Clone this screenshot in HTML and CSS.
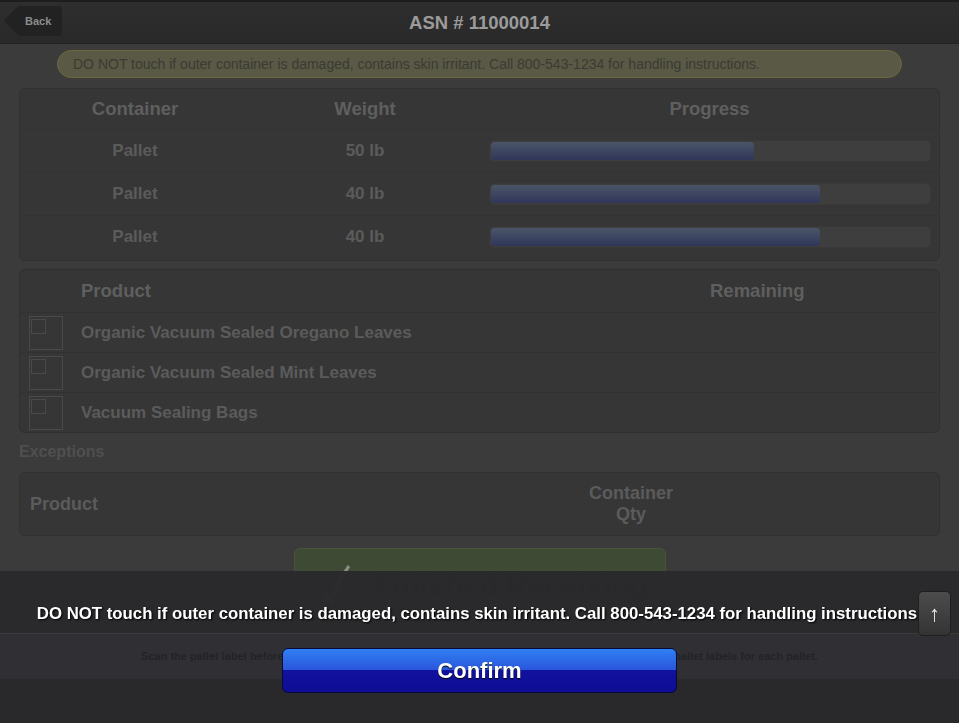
FILE: index.html
```html
<!DOCTYPE html>
<html>
<head>
    <title>ASN # 11000014 - Receiving</title>
    <link rel="stylesheet" href="styles.css">
</head>
<body>
    <div class="page">
        <header class="bar">
            <a class="back" href="#">Back</a>
            <h1>ASN # 11000014</h1>
        </header>

        <main class="content">
            <p class="notice">DO NOT touch if outer container is damaged, contains skin irritant. Call 800-543-1234 for handling instructions.</p>

            <!-- containers on this ASN -->
            <section class="box containers">
                <div class="crow head">
                    <span>Container</span>
                    <span>Weight</span>
                    <span>Progress</span>
                </div>
                <div class="crow">
                    <span>Pallet</span>
                    <span>50 lb</span>
                    <div class="track"><div class="fill" style="width: 60%"></div></div>
                </div>
                <div class="crow">
                    <span>Pallet</span>
                    <span>40 lb</span>
                    <div class="track"><div class="fill" style="width: 75%"></div></div>
                </div>
                <div class="crow">
                    <span>Pallet</span>
                    <span>40 lb</span>
                    <div class="track"><div class="fill" style="width: 75%"></div></div>
                </div>
            </section>

            <!-- products -->
            <section class="box products">
                <div class="prow head">
                    <span></span>
                    <span>Product</span>
                    <span>Remaining</span>
                </div>
                <div class="prow">
                    <span class="check"><span></span></span>
                    <span>Organic Vacuum Sealed Oregano Leaves</span>
                    <span></span>
                </div>
                <div class="prow">
                    <span class="check"><span></span></span>
                    <span>Organic Vacuum Sealed Mint Leaves</span>
                    <span></span>
                </div>
                <div class="prow">
                    <span class="check"><span></span></span>
                    <span>Vacuum Sealing Bags</span>
                    <span></span>
                </div>
            </section>

            <h3 class="label">Exceptions</h3>
            <section class="box exceptions">
                <div class="erow">
                    <span>Product</span>
                    <span class="qty">Container Qty</span>
                </div>
            </section>

            <button class="finish">
                <svg width="30" height="42" viewBox="0 0 30 42"><path d="M2 26 L11 38 Q16 18 28 2" fill="none" stroke="#8c8c8c" stroke-width="3"/></svg>
                Finished Receiving
            </button>
        </main>

        <footer class="foot">Scan the pallet label before receiving any product on this ASN. Be sure to print and attach the correct pallet labels for each pallet.</footer>
    </div>

    <!-- warning popup -->
    <div class="dialog">
        <p class="dialog-msg">DO NOT touch if outer container is damaged, contains skin irritant. Call 800-543-1234 for handling instructions</p>
        <button class="confirm">Confirm</button>
        <button class="to-top">&uarr;</button>
    </div>
</body>
</html>
```

FILE: styles.css
```css
* {
    box-sizing: border-box;
}
html, body {
    margin: 0;
    height: 100%;
}
body {
    background-color: #29292c;
    font-family: "Liberation Sans", Arial, sans-serif;
    overflow: hidden;
}
.page {
    background-color: #3b3b3b;
}
.bar {
    position: relative;
    height: 44px;
    display: flex;
    align-items: center;
    justify-content: center;
    background: linear-gradient(#2e2e2e, #292929);
    border-top: 2px solid #1d1d1d;
    border-bottom: 1px solid #242424;
}
.bar h1 {
    margin: 0;
    font-size: 18.5px;
    color: #9b9b9b;
}
.back {
    position: absolute;
    z-index: 1;
    left: 18px;
    top: 4px;
    width: 44px;
    height: 30px;
    line-height: 30px;
    padding-left: 7px;
    background-color: #222;
    border-radius: 0 4px 4px 0;
    color: #8c8c8c;
    font-size: 11px;
    font-weight: bold;
    text-decoration: none;
}
.back::before {
    content: "";
    position: absolute;
    left: -10px;
    top: 4px;
    width: 21px;
    height: 21px;
    background-color: #222;
    transform: rotate(45deg);
    border-radius: 2px;
    z-index: -1;
}
.content {
    padding: 6px 19px 0;
}
.notice {
    margin: 0 38px 10px;
    height: 28px;
    padding: 0 15px;
    border-radius: 14px;
    background-color: #595945;
    border: 1px solid #6b683d;
    color: #3b3b33;
    font-size: 14px;
    line-height: 26px;
}
.box {
    background-color: #363636;
    border: 1px solid #303030;
    border-radius: 6px;
    color: #5b5b5b;
    font-weight: bold;
}
.containers {
    margin-bottom: 8px;
    padding-bottom: 2px;
}
.crow {
    display: grid;
    grid-template-columns: 230px 230px 1fr;
    align-items: center;
    height: 43px;
    font-size: 17px;
    text-align: center;
    border-top: 1px solid #333;
}
.crow.head {
    height: 40px;
    font-size: 18.5px;
    color: #5f5f5f;
    border-top: none;
}
.track {
    margin: 0 8px 0 9px;
    height: 22px;
    padding: 1px;
    background-color: #3e3e3e;
    border: 1px solid #393939;
    border-radius: 5px;
}
.fill {
    height: 18px;
    border-radius: 4px;
    background: linear-gradient(#4b5567, #2f365a);
}
.products {
    margin-bottom: 8px;
}
.prow {
    display: grid;
    grid-template-columns: 34px 611px 1fr;
    column-gap: 18px;
    align-items: center;
    height: 40px;
    padding-left: 9px;
    font-size: 17px;
    border-top: 1px solid #313131;
}
.prow.head {
    height: 42px;
    font-size: 18.5px;
    color: #5f5f5f;
    border-top: none;
}
.check {
    width: 34px;
    height: 34px;
    border: 1px solid #4a4a4a;
}
.check span {
    display: block;
    width: 15px;
    height: 15px;
    margin: 2px 0 0 1px;
    border: 1px solid #4a4a4a;
}
.label {
    margin: 0 0 9px;
    font-size: 16px;
    line-height: 22px;
    color: #4f4f4f;
}
.exceptions {
    margin-bottom: 12px;
}
.erow {
    display: grid;
    grid-template-columns: 551px 100px 1fr;
    align-items: center;
    height: 62px;
    padding-left: 10px;
    font-size: 18px;
}
.qty {
    text-align: center;
    line-height: 21px;
}
.finish {
    display: flex;
    align-items: center;
    gap: 24px;
    width: 372px;
    height: 73px;
    margin: 0 auto;
    padding: 0 0 0 26px;
    background-color: #3e4a33;
    border: 1px solid #47533b;
    border-radius: 6px;
    color: #1f2419;
    font-family: "Liberation Sans", Arial, sans-serif;
    font-size: 30px;
    font-weight: bold;
}
.foot {
    margin-top: 13px;
    height: 45px;
    line-height: 45px;
    background-color: #303034;
    color: #232326;
    font-size: 11px;
    font-weight: bold;
    text-align: center;
}
.dialog {
    position: fixed;
    left: 0;
    right: 0;
    bottom: 0;
    height: 152px;
}
.dialog-msg {
    margin: 0;
    height: 62px;
    padding: 33px 5px 0 0;
    background-color: rgba(41, 41, 44, 0.97);
    color: #fff;
    font-size: 16.8px;
    font-weight: bold;
    line-height: 20px;
    text-align: center;
    text-shadow: 1px 1px 2px #000;
}
.confirm {
    display: block;
    width: 395px;
    height: 45px;
    margin: 15px auto 0;
    border: 1px solid #08083a;
    border-radius: 6px;
    background: linear-gradient(#2f80f3 0%, #2a56db 48%, #11119f 49%, #0d0d94 100%);
    color: #fff;
    font-family: "Liberation Sans", Arial, sans-serif;
    font-size: 22px;
    font-weight: bold;
    text-shadow: 0 1px 1px #000;
}
.to-top {
    position: absolute;
    right: 8px;
    top: 20px;
    width: 33px;
    height: 45px;
    padding: 0;
    border: 1px solid #1e1e1e;
    border-radius: 5px;
    background: linear-gradient(#4c4c4c, #343434);
    color: #e6e6e6;
    font-size: 22px;
}
```
